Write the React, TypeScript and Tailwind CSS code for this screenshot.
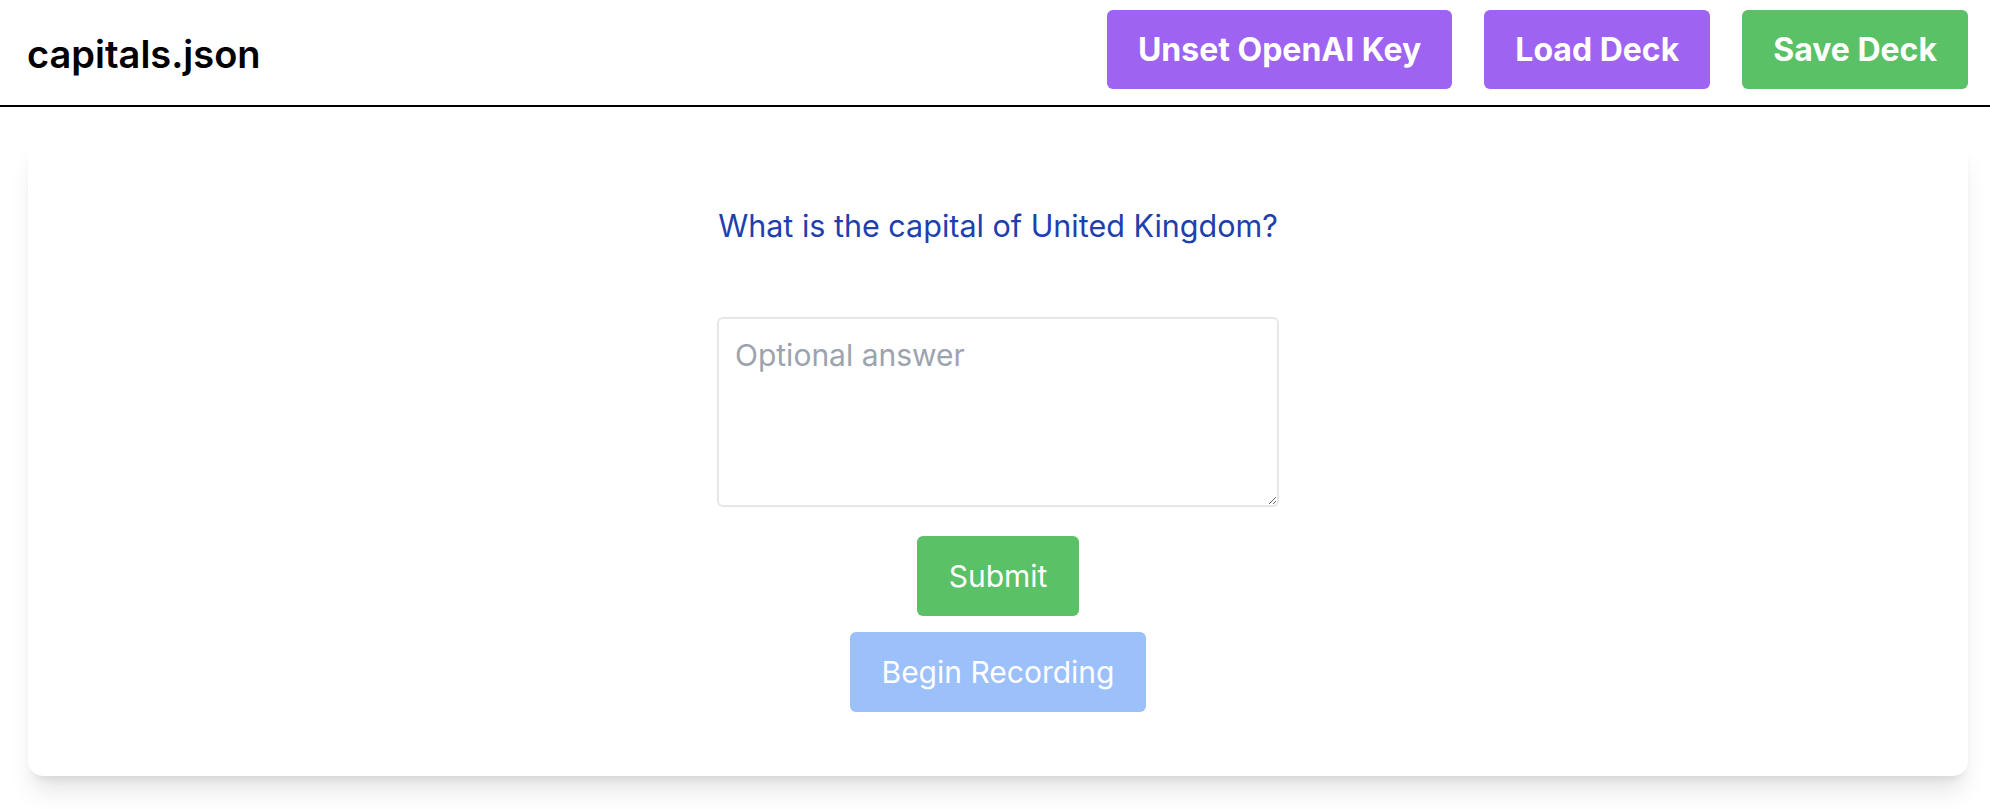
export default function App() {
    return (
        <div className="min-h-[810px] w-full bg-white font-['Inter',sans-serif]">
            <header className="h-[107px] pl-[27px] pr-[22px] flex items-start justify-between border-b-2 border-black">
                <h1 className="mt-[30px] text-[38px] leading-[48px] font-semibold text-black">capitals.json</h1>
                <div className="flex gap-8 mt-[10px]">
                    <button className="h-[79px] px-[31px] rounded-md bg-[#9f63f2] text-white text-[32px] font-bold">Unset OpenAI Key</button>
                    <button className="h-[79px] px-[31px] rounded-md bg-[#9f63f2] text-white text-[32px] font-bold">Load Deck</button>
                    <button className="h-[79px] px-[31px] rounded-md bg-[#5bc167] text-white text-[32px] font-bold">Save Deck</button>
                </div>
            </header>
            <main className="pl-[28px] pr-[22px] pt-[30px]">
                <div className="h-[639px] rounded-[15px] bg-white shadow-xl flex flex-col items-center pt-[71px]">
                    <p className="text-[30.5px] leading-[36px] text-[#1e40af]">What is the capital of United Kingdom?</p>
                    <textarea
                        placeholder="Optional answer"
                        className="mt-[73px] w-[562px] h-[190px] px-4 pt-[14px] rounded-md border-2 border-[#e5e7eb] text-[30px] leading-[45px] placeholder:text-[#9ca3af] outline-none"
                    />
                    <button className="mt-[29px] h-[80px] px-8 rounded-md bg-[#5bc167] text-white text-[30px]">Submit</button>
                    <button disabled className="mt-[16px] h-[80px] px-8 rounded-md bg-[#3b82f6] opacity-50 text-white text-[30px]">Begin Recording</button>
                </div>
            </main>
        </div>
    )
}
